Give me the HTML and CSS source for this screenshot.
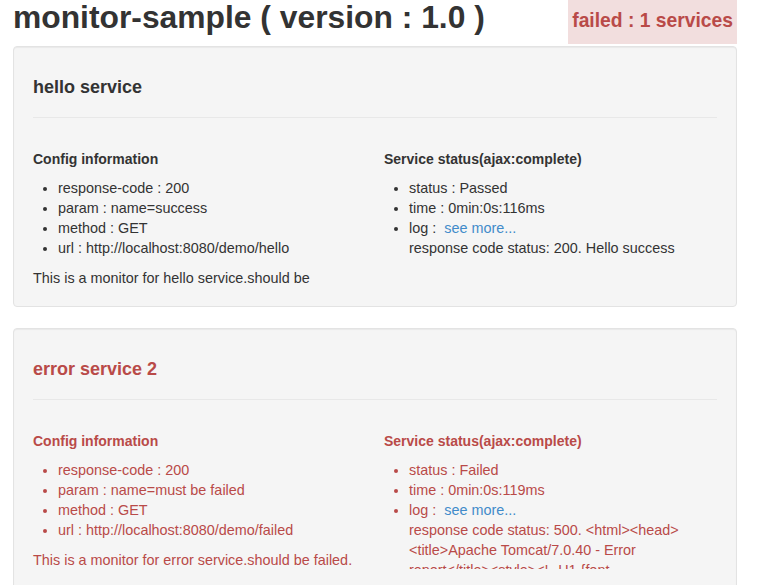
FILE: index.html
```html
<!DOCTYPE html>
<html lang="en">
<head>
  <meta charset="UTF-8">
  <title>monitor-sample</title>
  <link rel="stylesheet" href="styles.css">
</head>
<body>
  <div class="container">
    <div class="header">
      <h1>monitor-sample ( version : 1.0 )</h1>
      <div class="summary">failed : 1 services</div>
    </div>

    <div class="well">
      <h4>hello service</h4>
      <hr>
      <div class="row">
        <div class="col">
          <h5>Config information</h5>
          <ul>
            <li>response-code : 200</li>
            <li>param : name=success</li>
            <li>method : GET</li>
            <li>url : http://localhost:8080/demo/hello</li>
          </ul>
          <p>This is a monitor for hello service.should be</p>
        </div>
        <div class="col">
          <h5>Service status(ajax:complete)</h5>
          <ul>
            <li>status : Passed</li>
            <li>time : 0min:0s:116ms</li>
            <li>log : <a href="#">see more...</a>
              <div class="log">response code status: 200. Hello success</div>
            </li>
          </ul>
        </div>
      </div>
    </div>

    <div class="well error">
      <h4>error service 2</h4>
      <hr>
      <div class="row">
        <div class="col">
          <h5>Config information</h5>
          <ul>
            <li>response-code : 200</li>
            <li>param : name=must be failed</li>
            <li>method : GET</li>
            <li>url : http://localhost:8080/demo/failed</li>
          </ul>
          <p>This is a monitor for error service.should be failed.</p>
        </div>
        <div class="col">
          <h5>Service status(ajax:complete)</h5>
          <ul>
            <li>status : Failed</li>
            <li>time : 0min:0s:119ms</li>
            <li>log : <a href="#">see more...</a>
              <div class="log">response code status: 500. &lt;html&gt;&lt;head&gt;&lt;title&gt;Apache Tomcat/7.0.40 - Error report&lt;/title&gt;&lt;style&gt;&lt;!--H1 {font-family:Tahoma,Arial,sans-serif;color:white;background-color:#525D76;font-size:22px;}--&gt;&lt;/style&gt;</div>
            </li>
          </ul>
        </div>
      </div>
    </div>
  </div>
</body>
</html>
```

FILE: styles.css
```css
* {
  box-sizing: border-box;
}

body {
  margin: 0;
  font-family: "Liberation Sans", Arial, sans-serif;
  font-size: 14.4px;
  line-height: 20px;
  color: #333;
  background: #fff;
}

.container {
  width: 724px;
  margin-left: 13px;
}

.header {
  display: flex;
  justify-content: space-between;
  align-items: flex-start;
  height: 44px;
  margin-bottom: 2px;
}

.header h1 {
  margin: 0;
  font-size: 31.8px;
  line-height: 34px;
  font-weight: bold;
}

.summary {
  height: 44px;
  padding: 10px 4px 0;
  background: #f2dede;
  color: #b94a48;
  font-size: 19.3px;
  line-height: 22px;
  font-weight: bold;
}

.well {
  background: #f5f5f5;
  border: 1px solid #e3e3e3;
  border-radius: 4px;
  box-shadow: inset 0 1px 1px rgba(0, 0, 0, 0.05);
  padding: 19px 19px 18px;
  margin-bottom: 21px;
}

.well h4 {
  margin: 11px 0 0;
  font-size: 18px;
  line-height: 20px;
}

.well hr {
  margin: 20px 0;
  border: 0;
  border-top: 1px solid #e8e8e8;
}

.row {
  display: grid;
  grid-template-columns: 351px 1fr;
}

.col h5 {
  margin: 13px 0 11px;
  font-size: 14px;
  line-height: 16px;
}

.col ul {
  margin: 0 0 10px;
  padding-left: 25px;
}

.col p {
  margin: 0;
}

a {
  color: #428bca;
  text-decoration: none;
  margin-left: 4px;
}

.log {
  max-height: 49px;
  overflow: hidden;
}

.error {
  color: #b94a48;
}
```
